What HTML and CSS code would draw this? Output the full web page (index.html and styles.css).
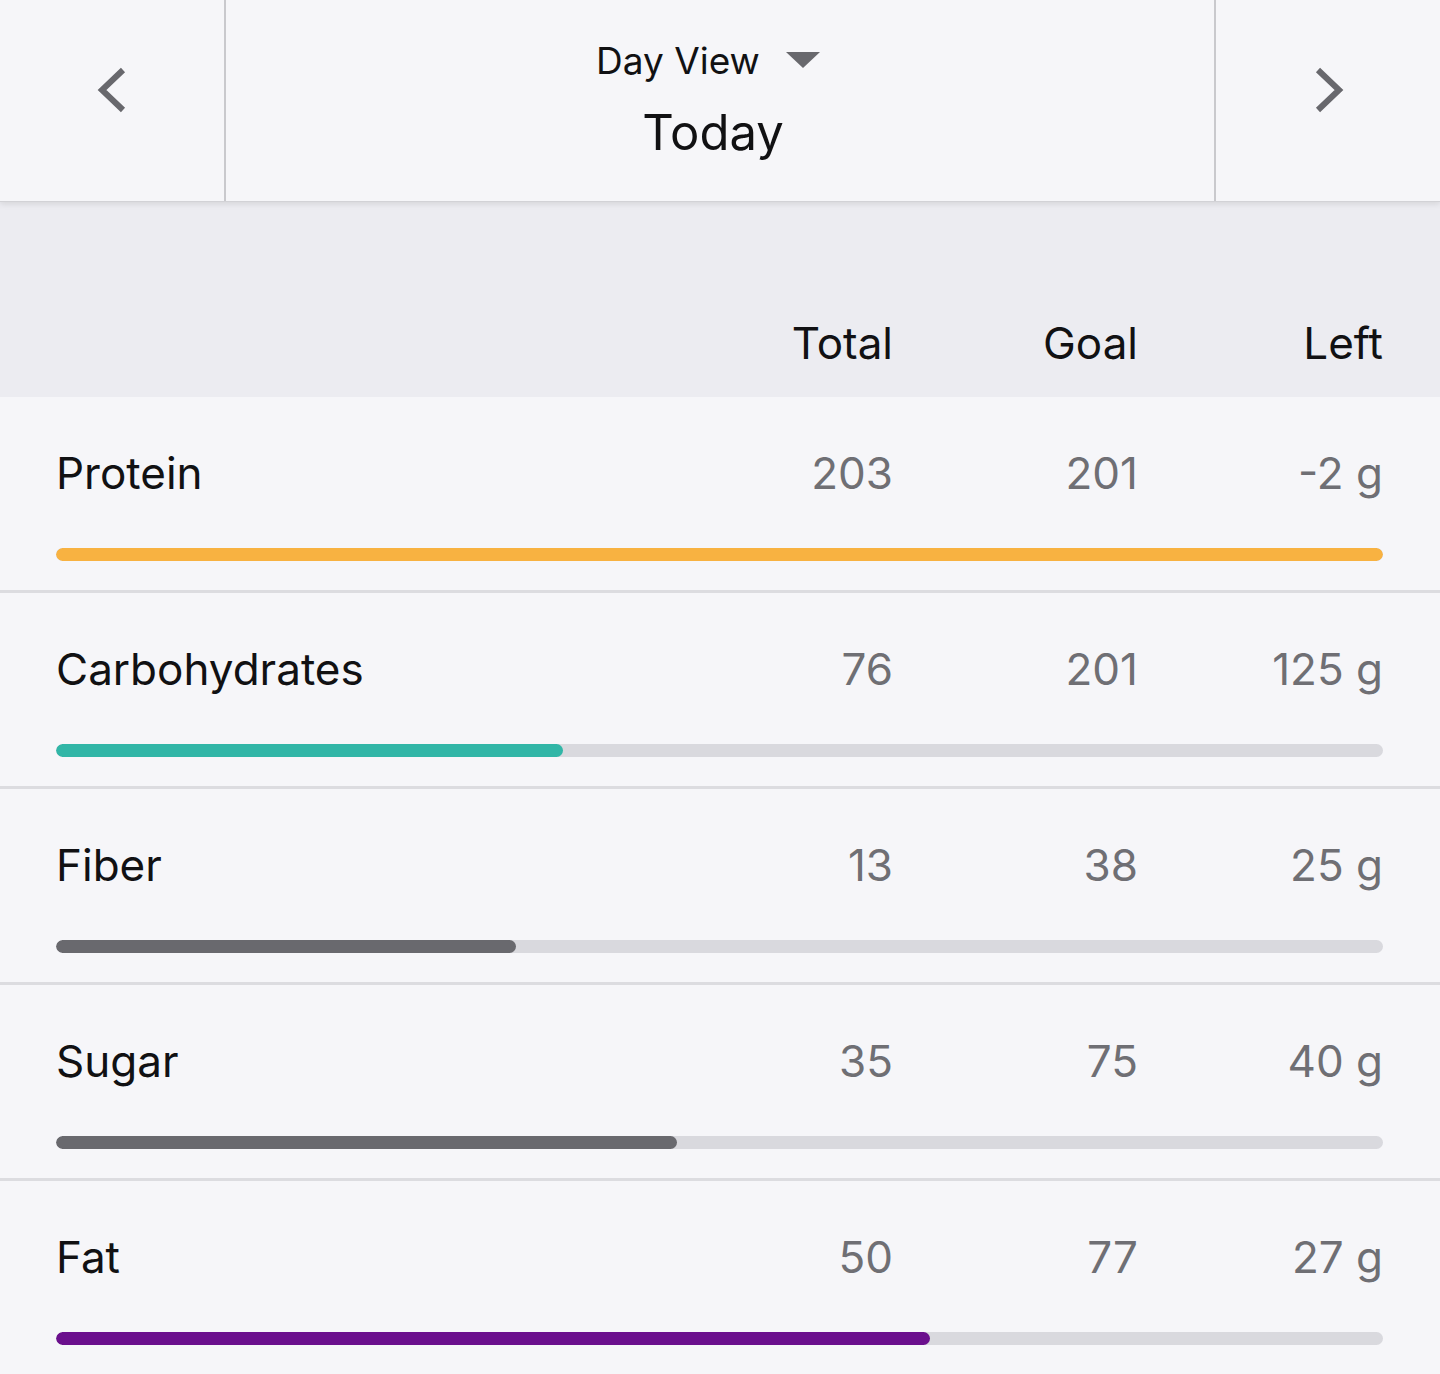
FILE: index.html
```html
<!DOCTYPE html>
<html lang="en">
<head>
    <meta charset="UTF-8">
    <meta name="viewport" content="width=device-width, initial-scale=1.0">
    <title>Nutrients</title>
    <link rel="stylesheet" href="styles.css">
</head>
<body>
    <header class="day-nav">
        <button class="nav-btn nav-prev" aria-label="Previous day">
            <svg width="30" height="48" viewBox="0 0 30 48"><path d="M26 4 L5 24 L26 44" fill="none" stroke="#68686d" stroke-width="6"/></svg>
        </button>
        <div class="nav-center">
            <div class="view-select">
                <span>Day View</span>
                <svg class="caret" width="34" height="16" viewBox="0 0 34 16"><path d="M0 0 H34 L17 16 Z" fill="#68686d"/></svg>
            </div>
            <div class="nav-date">Today</div>
        </div>
        <button class="nav-btn nav-next" aria-label="Next day">
            <svg width="30" height="48" viewBox="0 0 30 48"><path d="M4 4 L25 24 L4 44" fill="none" stroke="#68686d" stroke-width="6"/></svg>
        </button>
    </header>

    <section class="nutrients">
        <div class="nutrient-head">
            <span></span>
            <span class="col">Total</span>
            <span class="col">Goal</span>
            <span class="col">Left</span>
        </div>

        <div class="nutrient-row">
            <div class="nutrient-line">
                <span class="name">Protein</span>
                <span class="num">203</span>
                <span class="num">201</span>
                <span class="num">-2 g</span>
            </div>
            <div class="bar"><div class="fill fill-protein" style="width: 100%"></div></div>
        </div>

        <div class="nutrient-row">
            <div class="nutrient-line">
                <span class="name">Carbohydrates</span>
                <span class="num">76</span>
                <span class="num">201</span>
                <span class="num">125 g</span>
            </div>
            <div class="bar"><div class="fill fill-carbs" style="width: 38.2%"></div></div>
        </div>

        <div class="nutrient-row">
            <div class="nutrient-line">
                <span class="name">Fiber</span>
                <span class="num">13</span>
                <span class="num">38</span>
                <span class="num">25 g</span>
            </div>
            <div class="bar"><div class="fill fill-grey" style="width: 34.7%"></div></div>
        </div>

        <div class="nutrient-row">
            <div class="nutrient-line">
                <span class="name">Sugar</span>
                <span class="num">35</span>
                <span class="num">75</span>
                <span class="num">40 g</span>
            </div>
            <div class="bar"><div class="fill fill-grey" style="width: 46.8%"></div></div>
        </div>

        <div class="nutrient-row">
            <div class="nutrient-line">
                <span class="name">Fat</span>
                <span class="num">50</span>
                <span class="num">77</span>
                <span class="num">27 g</span>
            </div>
            <div class="bar"><div class="fill fill-fat" style="width: 65.9%"></div></div>
        </div>
    </section>
</body>
</html>
```

FILE: styles.css
```css
/* General */
body {
    margin: 0;
    padding: 0;
    font-family: Inter, "Noto Sans", sans-serif;
    background-color: #f6f6f9;
    color: #111113;
}

/* Day navigation */
.day-nav {
    display: flex;
    height: 202px;
    box-sizing: border-box;
    background-color: #f6f6f9;
    border-bottom: 1px solid #d2d2d6;
    box-shadow: 0 2px 6px rgba(0, 0, 0, 0.10);
    position: relative;
    z-index: 1;
}

.nav-btn {
    width: 226px;
    flex: none;
    background: none;
    border: none;
    padding: 0 0 22px 0;
    cursor: pointer;
    display: flex;
    align-items: center;
    justify-content: center;
}

.nav-prev {
    border-right: 2px solid #c9c9cd;
}

.nav-next {
    border-left: 2px solid #c9c9cd;
    padding-left: 2px;
}

.nav-center {
    flex: 1;
    display: flex;
    flex-direction: column;
    align-items: center;
    padding-top: 36px;
    padding-right: 14px;
}

.view-select {
    display: flex;
    align-items: center;
    gap: 26px;
    font-size: 37px;
    line-height: 50px;
    margin-right: 10px;
}

.caret {
    margin-top: -2px;
}

.nav-date {
    font-size: 49px;
    line-height: 60px;
    margin-top: 17px;
}

/* Nutrient table */
.nutrient-head {
    display: grid;
    grid-template-columns: 1fr 245px 245px 245px;
    align-items: end;
    height: 195px;
    box-sizing: border-box;
    padding: 0 57px 26px 56px;
    background-color: #ececf1;
    font-size: 44px;
    line-height: 56px;
}

.col {
    text-align: right;
}

.nutrient-row {
    height: 196px;
    box-sizing: border-box;
    padding: 48px 57px 0 56px;
    border-bottom: 3px solid #dcdce0;
}

.nutrient-line {
    display: grid;
    grid-template-columns: 1fr 245px 245px 245px;
    font-size: 44px;
    line-height: 56px;
}

.num {
    text-align: right;
    color: #6f6f74;
}

.bar {
    margin-top: 47px;
    height: 13px;
    border-radius: 7px;
    background-color: #d9d9de;
    overflow: hidden;
}

.fill {
    height: 100%;
    border-radius: 7px;
}

.fill-protein {
    background-color: #f8b241;
}

.fill-carbs {
    background-color: #31b6a7;
}

.fill-grey {
    background-color: #69696e;
}

.fill-fat {
    background-color: #6b0f8d;
}
```
